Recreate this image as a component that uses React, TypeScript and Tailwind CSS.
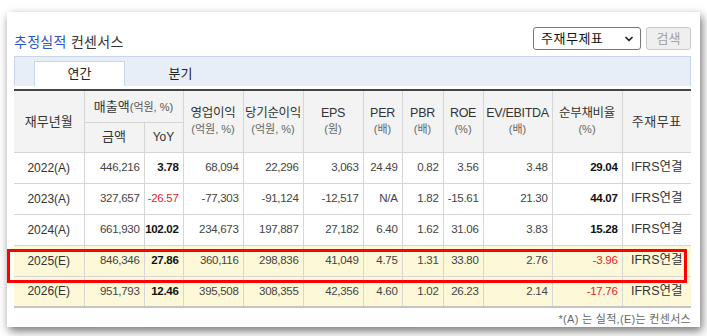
import { ChevronDown } from "lucide-react";

const font = { fontFamily: "'Liberation Sans', 'Noto Sans CJK KR', sans-serif" };

type Row = {
  ym: string;
  est: boolean;
  vals: string[];
};

const rows: Row[] = [
  { ym: "2022(A)", est: false, vals: ["446,216", "3.78", "68,094", "22,296", "3,063", "24.49", "0.82", "3.56", "3.48", "29.04"] },
  { ym: "2023(A)", est: false, vals: ["327,657", "-26.57", "-77,303", "-91,124", "-12,517", "N/A", "1.82", "-15.61", "21.30", "44.07"] },
  { ym: "2024(A)", est: false, vals: ["661,930", "102.02", "234,673", "197,887", "27,182", "6.40", "1.62", "31.06", "3.83", "15.28"] },
  { ym: "2025(E)", est: true, vals: ["846,346", "27.86", "360,116", "298,836", "41,049", "4.75", "1.31", "33.80", "2.76", "-3.96"] },
  { ym: "2026(E)", est: true, vals: ["951,793", "12.46", "395,508", "308,355", "42,356", "4.60", "1.02", "26.23", "2.14", "-17.76"] },
];

const widths = [70, 60, 39, 60, 60, 60, 39, 41, 40, 69, 70, 69];

function Head2({ top, sub }: { top: string; sub: string }) {
  return (
    <th rowSpan={2} className="border-l border-b border-[#d6d6d6] font-normal align-middle whitespace-nowrap">
      <div className="text-[12.5px] leading-[15px] text-[#333] tracking-[-0.3px]">{top}</div>
      <div className="text-[11px] leading-[14px] text-[#666] mt-[1px]">{sub}</div>
    </th>
  );
}

function cellClass(i: number, v: string) {
  const neg = v.startsWith("-");
  if (i === 1 || i === 9) {
    return neg ? "text-[#e3262b]" : "font-bold text-[#111]";
  }
  return "text-[#444]";
}

export default function App() {
  return (
    <div className="w-[707px] h-[336px] bg-white overflow-hidden" style={font}>
      <div className="relative ml-[7px] mt-[12px] w-[693px] h-[315px] bg-white pl-[7px] pr-[9px] pt-[15px] shadow-[2px_4px_9px_rgba(0,0,0,0.55)]">
        <div className="flex items-end justify-between h-[23px]">
          <div className="text-[14px] leading-[16px] tracking-[0.3px]">
            <span className="text-[#2b56c9]">추정실적</span>{" "}
            <span className="text-[#333]">컨센서스</span>
          </div>
          <div className="flex gap-[5px] h-[23px]">
            <div className="w-[108px] h-[23px] border border-[#777] rounded-[3px] flex items-center justify-between pl-[7px] pr-[5px] text-[13px] text-[#111] bg-white">
              <span className="tracking-[0.5px]">주재무제표</span>
              <ChevronDown size={12} strokeWidth={3.5} color="#222" />
            </div>
            <div className="w-[45px] h-[23px] border border-[#c9c9c9] rounded-[3px] bg-[#efefef] flex items-center justify-center text-[13px] text-[#a3a3a3]">
              검색
            </div>
          </div>
        </div>

        <div className="mt-[6px] h-[30px] bg-[#e8eef8] border border-b-0 border-[#c9d5e8] flex items-end pl-[19px] gap-[10px]">
          <div className="w-[91px] h-[25px] bg-white border border-b-0 border-[#c9d5e8] flex items-center justify-center text-[13px] text-[#222]">
            연간
          </div>
          <div className="w-[91px] h-[25px] flex items-center justify-center text-[13px] text-[#222]">
            분기
          </div>
        </div>

        <div className="relative mt-[3px] border-t-2 border-[#444]">
          <table className="w-[677px] table-fixed border-collapse border-b-2 border-[#c4c4c4]">
            <colgroup>
              {widths.map((w, i) => (
                <col key={i} style={{ width: w }} />
              ))}
            </colgroup>
            <thead className="bg-[#f3f3f3]">
              <tr className="h-[31px]">
                <th rowSpan={2} className="border-b border-[#d6d6d6] font-normal text-[13px] text-[#333]">
                  재무년월
                </th>
                <th colSpan={2} className="border-l border-b border-[#d6d6d6] font-normal text-[13px] text-[#333] whitespace-nowrap">
                  매출액<span className="text-[11px] text-[#555]">(억원, %)</span>
                </th>
                <Head2 top="영업이익" sub="(억원, %)" />
                <Head2 top="당기순이익" sub="(억원, %)" />
                <Head2 top="EPS" sub="(원)" />
                <Head2 top="PER" sub="(배)" />
                <Head2 top="PBR" sub="(배)" />
                <Head2 top="ROE" sub="(%)" />
                <Head2 top="EV/EBITDA" sub="(배)" />
                <Head2 top="순부채비율" sub="(%)" />
                <th rowSpan={2} className="border-l border-b border-[#d6d6d6] font-normal text-[13px] text-[#333] tracking-[0.5px]">
                  주재무표
                </th>
              </tr>
              <tr className="h-[30px]">
                <th className="border-l border-b border-[#d6d6d6] font-normal text-[13px] text-[#333]">금액</th>
                <th className="border-l border-b border-[#d6d6d6] font-normal text-[12px] text-[#333]">YoY</th>
              </tr>
            </thead>
            <tbody>
              {rows.map((r) => (
                <tr key={r.ym} className={`h-[31px] ${r.est ? "bg-[#fcf8d8]" : "bg-white"}`}>
                  <td className="border-b border-[#d6d6d6] text-center text-[12px] text-[#333]">{r.ym}</td>
                  {r.vals.map((v, i) => (
                    <td
                      key={i}
                      className={`border-l border-b border-[#d6d6d6] text-right pr-[4px] text-[11.5px] tracking-[-0.3px] whitespace-nowrap ${cellClass(i, v)}`}
                    >
                      {v}
                    </td>
                  ))}
                  <td className="border-l border-b border-[#d6d6d6] text-center text-[12.5px] text-[#333] whitespace-nowrap">IFRS연결</td>
                </tr>
              ))}
            </tbody>
          </table>
          <div className="absolute left-[-7px] top-[158px] w-[680px] h-[34px] border-[3px] border-[#ff0000] pointer-events-none" />
        </div>

        <div className="mt-[4px] text-right text-[11px] leading-[14px] text-[#666] tracking-[0.3px]">
          *(A) 는 실적,(E)는 컨센서스
        </div>
      </div>
    </div>
  );
}
